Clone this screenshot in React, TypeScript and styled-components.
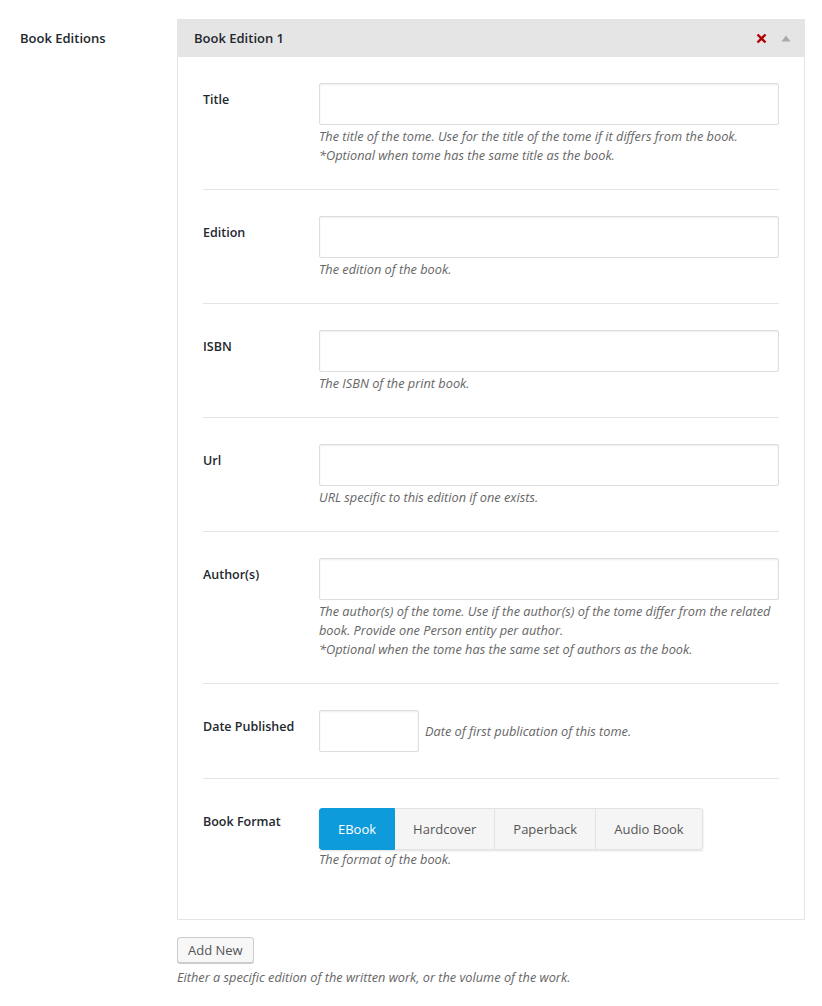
import styled, { createGlobalStyle } from 'styled-components'

const GlobalStyle = createGlobalStyle`
  body {
    margin: 0;
    background: #fff;
    font-family: "Open Sans", "Noto Sans", sans-serif;
    color: #23282d;
  }
`

type Field = {
  label: string
  desc: string[]
}

const fields: Field[] = [
  {
    label: 'Title',
    desc: [
      'The title of the tome. Use for the title of the tome if it differs from the book.',
      '*Optional when tome has the same title as the book.',
    ],
  },
  { label: 'Edition', desc: ['The edition of the book.'] },
  { label: 'ISBN', desc: ['The ISBN of the print book.'] },
  { label: 'Url', desc: ['URL specific to this edition if one exists.'] },
  {
    label: 'Author(s)',
    desc: [
      'The author(s) of the tome. Use if the author(s) of the tome differ from the related book. Provide one Person entity per author.',
      '*Optional when the tome has the same set of authors as the book.',
    ],
  },
]

const formats = ['EBook', 'Hardcover', 'Paperback', 'Audio Book']

const App = () => {
  return (
    <Page>
      <GlobalStyle />
      <SideLabel>Book Editions</SideLabel>
      <Main>
        <Panel>
          <PanelHeader>
            <PanelTitle>Book Edition 1</PanelTitle>
            <Tools>
              <svg width="11" height="11" viewBox="0 0 11 11">
                <path d="M1.5 1.5 L9.5 9.5 M9.5 1.5 L1.5 9.5" stroke="#b30000" strokeWidth="2.4" />
              </svg>
              <svg width="10" height="7" viewBox="0 0 10 7">
                <path d="M5 0.5 L9.5 6.5 L0.5 6.5 Z" fill="#aaa" />
              </svg>
            </Tools>
          </PanelHeader>
          <PanelBody>
            {fields.map((f) => (
              <Row key={f.label}>
                <RowLabel>{f.label}</RowLabel>
                <div>
                  <TextInput />
                  <Desc>
                    {f.desc.map((d) => (
                      <div key={d}>{d}</div>
                    ))}
                  </Desc>
                </div>
              </Row>
            ))}
            <Row pb={26}>
              <RowLabel>Date Published</RowLabel>
              <Inline>
                <TextInput small />
                <Desc inline>Date of first publication of this tome.</Desc>
              </Inline>
            </Row>
            <Row last>
              <RowLabel>Book Format</RowLabel>
              <div>
                <Group>
                  {formats.map((f, i) => (
                    <GroupButton key={f} active={i === 0}>
                      {f}
                    </GroupButton>
                  ))}
                </Group>
                <Desc inline>The format of the book.</Desc>
              </div>
            </Row>
          </PanelBody>
        </Panel>
        <AddButton>Add New</AddButton>
        <Footnote>Either a specific edition of the written work, or the volume of the work.</Footnote>
      </Main>
    </Page>
  )
}

export default App

const Page = styled.div`
  display: grid;
  grid-template-columns: 157px 628px;
  padding: 19px 0 0 20px;
`

const SideLabel = styled.div`
  font-size: 13px;
  font-weight: 600;
  line-height: 20px;
  padding-top: 9px;
`

const Main = styled.div`
  display: flex;
  flex-direction: column;
  align-items: flex-start;
`

const Panel = styled.div`
  width: 100%;
  box-sizing: border-box;
  border: 1px solid #e5e5e5;
  border-top: none;
`

const PanelHeader = styled.div`
  height: 38px;
  margin: 0 -1px;
  background: #e5e5e5;
  display: flex;
  align-items: center;
  justify-content: space-between;
  padding: 0 14px 0 17px;
`

const PanelTitle = styled.div`
  font-size: 13px;
  font-weight: 600;
`

const Tools = styled.div`
  display: flex;
  align-items: center;
  gap: 14px;
`

const PanelBody = styled.div`
  padding: 0 25px 26px 25px;
`

const Row = styled.div<{ last?: boolean; pb?: number }>`
  display: grid;
  grid-template-columns: 116px 1fr;
  padding: 26px 0 ${({ pb }) => pb ?? 24}px;
  border-bottom: ${({ last }) => (last ? 'none' : '1px solid #e5e5e5')};
`

const RowLabel = styled.div`
  font-size: 12.5px;
  font-weight: 600;
  line-height: 20px;
  padding-top: 7px;
`

const TextInput = styled.input<{ small?: boolean }>`
  display: block;
  box-sizing: border-box;
  width: ${({ small }) => (small ? '100px' : '100%')};
  height: 42px;
  border: 1px solid #ddd;
  border-radius: 2px;
  box-shadow: inset 0 1px 2px rgba(0, 0, 0, 0.07);
  background: #fff;
  outline: none;
`

const Desc = styled.div<{ inline?: boolean }>`
  font-size: 12.75px;
  font-style: italic;
  color: #666;
  line-height: 19px;
  margin-top: ${({ inline }) => (inline ? '0' : '2px')};
`

const Inline = styled.div`
  display: flex;
  align-items: center;
  gap: 6px;
`

const Group = styled.div`
  display: flex;
  margin-top: 3px;
  box-shadow: 0 1px 2px rgba(0, 0, 0, 0.12);
  width: max-content;
`

const GroupButton = styled.div<{ active?: boolean }>`
  height: 42px;
  box-sizing: border-box;
  padding: 0 18px;
  display: flex;
  align-items: center;
  font-size: 13px;
  color: ${({ active }) => (active ? '#fff' : '#555')};
  background: ${({ active }) => (active ? '#0d9bdb' : '#f5f5f5')};
  border: 1px solid ${({ active }) => (active ? '#0d9bdb' : '#e3e3e3')};
  border-left-width: 0;
  border-radius: ${({ active }) => (active ? '3px 0 0 3px' : '0')};
  &:first-child {
    border-left-width: 1px;
  }
  &:last-child {
    border-radius: 0 3px 3px 0;
  }
`

const AddButton = styled.button`
  margin-top: 17px;
  height: 26px;
  padding: 0 10px;
  font-family: inherit;
  font-size: 13px;
  color: #555;
  background: #f7f7f7;
  border: 1px solid #ccc;
  border-radius: 3px;
  box-shadow: 0 1px 0 #ccc;
`

const Footnote = styled.div`
  margin-top: 5px;
  font-size: 12.75px;
  font-style: italic;
  color: #666;
  line-height: 19px;
`
